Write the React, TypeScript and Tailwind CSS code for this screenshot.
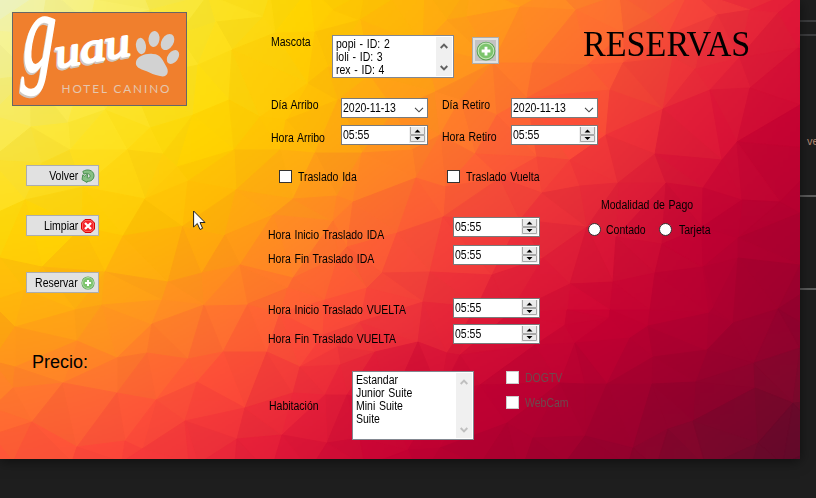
import React from "react";

type Pt = [number, number];

const VERTICES: Pt[] = [
  [-20, -20], [48, -12], [95, 0], [140, -15], [208, -5], [270, -5], [310, -12], [365, -8], [425, -10], [470, -15], [520, 7], [555, -12], [619, -5], [653, 17], [690, -10], [750, 10], [778, 13], [820, -20],
  [-15, 30], [40, 35], [90, 25], [150, 10], [178, 35], [216, 22], [263, 17], [275, 33], [315, 32], [333, 10], [360, 20], [392, 0], [423, 45], [447, 20], [466, 17], [493, 63], [576, 10], [533, 63], [623, 33], [668, 35], [717, 15], [700, 45], [798, 48], [739, 58], [830, 60],
  [-10, 80], [30, 75], [85, 65], [130, 80], [198, 65], [232, 50], [193, 115], [229, 100], [286, 120], [308, 83], [328, 67], [338, 100], [370, 75], [395, 110], [435, 92], [460, 100], [497, 115], [527, 98], [588, 65], [623, 63], [610, 90], [663, 109], [673, 57], [695, 69], [710, 90], [750, 88], [800, 105],
  [-10, 115], [31, 127], [68, 123], [105, 110], [150, 128], [42, 163], [-10, 160], [70, 150], [127, 150], [163, 154], [177, 167], [234, 150], [260, 117], [280, 150], [315, 153], [362, 153], [412, 150], [440, 135], [475, 154], [500, 178], [537, 157], [570, 160], [606, 135], [655, 154], [722, 160], [737, 142], [830, 150],
  [-8, 215], [25, 200], [83, 187], [145, 199], [188, 181], [236, 190], [123, 236], [82, 227], [42, 267], [0, 258], [105, 272], [168, 282], [202, 273], [183, 226], [225, 235], [273, 215], [293, 199], [337, 196], [353, 202], [416, 178], [445, 187], [443, 217], [333, 221], [397, 233], [347, 247], [338, 257], [293, 278], [382, 273], [430, 272], [492, 275], [520, 220], [542, 193], [580, 186], [618, 183], [666, 183], [703, 188], [742, 200], [780, 202], [800, 213], [830, 205],
  [587, 227], [616, 237], [662, 244], [543, 258], [570, 284], [613, 282], [655, 273], [703, 267], [702, 227], [738, 238], [738, 258], [800, 265], [830, 275], [713, 308], [650, 310], [610, 310], [567, 310], [778, 309],
  [-10, 302], [25, 290], [15, 327], [75, 310], [102, 305], [77, 341], [117, 358], [152, 324], [162, 300], [204, 305], [248, 304], [188, 359], [223, 352], [267, 352], [147, 353], [240, 265], [288, 288], [367, 288], [280, 313], [325, 300], [360, 322], [323, 335], [337, 347], [375, 352], [418, 342], [423, 302], [447, 353], [460, 355], [477, 307], [510, 313], [535, 345],
  [565, 325], [575, 343], [609, 318], [648, 326], [630, 338], [653, 357], [709, 313], [707, 350], [733, 323], [754, 363], [755, 388], [800, 348], [830, 340],
  [-8, 361], [15, 367], [13, 388], [63, 383], [32, 422], [-8, 408], [-8, 435], [117, 393], [156, 400], [197, 382], [185, 421], [245, 408], [237, 439], [77, 447], [125, 441], [142, 449], [300, 367], [340, 365], [293, 393], [325, 395], [347, 395], [282, 435], [327, 443], [360, 438], [390, 405], [408, 450], [440, 448], [440, 395], [480, 385], [507, 423], [533, 438], [560, 383],
  [585, 384], [607, 384], [652, 384], [695, 382], [693, 421], [668, 429], [633, 448], [585, 436], [758, 443], [793, 403], [830, 442], [830, 400],
  [-20, 485], [13, 462], [72, 462], [122, 462], [189, 462], [198, 464], [235, 463], [270, 475], [310, 470], [365, 466], [420, 480], [480, 465], [520, 475], [565, 463], [628, 465], [656, 468], [706, 467], [752, 465], [783, 464], [830, 485],
];

const ROWS = [0, 130, 230, 320, 395, 459];
const TONES = [
  ["eff6c4", "f5ee75", "f8e632", "ffd600", "ffbc05", "ffa018", "ff7b2e", "f4433b", "e01838"],
  ["f8ea55", "fbe225", "ffd800", "ffbc04", "ff931e", "ff6935", "f84039", "dc1837", "c60032"],
  ["ffd806", "ffcb00", "ffb106", "ff8a25", "fd5a38", "f13a3b", "dc1c37", "c00032", "aa002f"],
  ["ffad0c", "ff9e1a", "ff7b2d", "ff5638", "ef353b", "d91435", "c80032", "b10030", "90002d"],
  ["ff7b2c", "ff6a35", "fc4b39", "ec2b3a", "cf0734", "c00033", "a9002f", "8f002c", "760a2b"],
  ["ff5538", "f9433a", "ec2b3a", "d71136", "c00032", "ab002f", "94002d", "79092b", "5a0929"],
].map((r) => r.map((h) => [0, 2, 4].map((i) => parseInt(h.slice(i, i + 2), 16))));

function tone(x: number, y: number, shift: number) {
  const cx = Math.max(0, Math.min(799, x)) / 100;
  const cy = Math.max(0, Math.min(458, y));
  const r = ROWS.findIndex((v, i) => i < ROWS.length - 1 && cy >= v && cy < ROWS[i + 1]);
  const c = Math.floor(cx);
  const u = cx - c;
  const v = (cy - ROWS[r]) / (ROWS[r + 1] - ROWS[r]);
  const rgb = [0, 1, 2].map((k) => {
    const a = TONES[r][c][k] * (1 - u) + TONES[r][c + 1][k] * u;
    const b = TONES[r + 1][c][k] * (1 - u) + TONES[r + 1][c + 1][k] * u;
    return Math.round(Math.max(0, Math.min(255, (a * (1 - v) + b * v) * (1 + shift))));
  });
  return `rgb(${rgb.join(",")})`;
}

// Bowyer–Watson triangulation of the facet corners.
function triangulate(src: Pt[]) {
  const pts: Pt[] = [...src, [-5000, -4000], [6000, -4100], [400, 7000]];
  const n = src.length;
  const circle = (a: number, b: number, c: number) => {
    const [ax, ay] = pts[a], [bx, by] = pts[b], [cx, cy] = pts[c];
    const d = 2 * (ax * (by - cy) + bx * (cy - ay) + cx * (ay - by)) || 1e-9;
    const A = ax * ax + ay * ay, B = bx * bx + by * by, C = cx * cx + cy * cy;
    const x = (A * (by - cy) + B * (cy - ay) + C * (ay - by)) / d;
    const y = (A * (cx - bx) + B * (ax - cx) + C * (bx - ax)) / d;
    return { t: [a, b, c], x, y, r: (ax - x) ** 2 + (ay - y) ** 2 };
  };
  let tris = [circle(n, n + 1, n + 2)];
  for (let i = 0; i < n; i++) {
    const [px, py] = pts[i];
    const edges = new Map<string, Pt>();
    tris = tris.filter((t) => {
      if ((px - t.x) ** 2 + (py - t.y) ** 2 >= t.r) return true;
      for (let k = 0; k < 3; k++) {
        const a = t.t[k], b = t.t[(k + 1) % 3];
        const key = a < b ? `${a}_${b}` : `${b}_${a}`;
        if (edges.has(key)) edges.delete(key);
        else edges.set(key, [a, b]);
      }
      return false;
    });
    edges.forEach(([a, b]) => tris.push(circle(a, b, i)));
  }
  return tris.filter((t) => t.t.every((v) => v < n)).map((t) => t.t.map((v) => pts[v]));
}

const FACETS = triangulate(VERTICES).map((p, i) => ({
  points: p.map((q) => q.join(",")).join(" "),
  fill: tone(
    (p[0][0] + p[1][0] + p[2][0]) / 3,
    (p[0][1] + p[1][1] + p[2][1]) / 3,
    (((i * 37) % 11) - 5) * 0.0035
  ),
}));

// A smooth colour field lies under translucent facets, which keeps their edges soft.
const FIELD = Array.from({ length: 45 * 28 }, (_, i) => ({
  x: ((i % 45) - 2) * 20,
  y: (Math.floor(i / 45) - 2) * 20,
}));

function Backdrop() {
  return (
    <svg className="absolute inset-0" width="800" height="459" viewBox="0 0 800 459">
      <filter id="soften" filterUnits="userSpaceOnUse" x="-40" y="-40" width="880" height="540" colorInterpolationFilters="sRGB">
        <feGaussianBlur stdDeviation="10" />
      </filter>
      <g filter="url(#soften)">
        {FIELD.map((c, i) => (
          <rect key={i} x={c.x} y={c.y} width="21" height="21" fill={tone(c.x + 10, c.y + 10, 0)} />
        ))}
      </g>
      <g opacity="0.7">
        {FACETS.map((f, i) => (
          <polygon key={i} points={f.points} fill={f.fill} stroke={f.fill} strokeWidth="1" strokeLinejoin="round" />
        ))}
      </g>
    </svg>
  );
}

function T({ children, className = "" }: { children: React.ReactNode; className?: string }) {
  return (
    <span className={`block origin-left scale-x-[0.875] whitespace-nowrap text-[12px] leading-[13px] [word-spacing:0.9px] ${className}`}>
      {children}
    </span>
  );
}

function Plus({ size }: { size: number }) {
  return (
    <svg width={size} height={size} viewBox="0 0 16 16" className="shrink-0">
      <circle cx="8" cy="8" r="7.5" fill="#57a04f" />
      <circle cx="8" cy="8" r="6.3" fill="#7cc46c" stroke="#c4e6b8" strokeWidth="0.9" />
      <path d="M8 4.500v7M4.500 8h7" stroke="#fff" strokeWidth="2.3" />
    </svg>
  );
}

function Back() {
  return (
    <svg width="14" height="14" viewBox="0 0 14 14" className="shrink-0">
      <path d="M1.800 2.500C6-.5 12.800 1 13 6.500c0 4-3.200 6.200-7 5.900v1.100L1 10.600l.8-4.800 1.900 1.600c.6-1.400 1.800-2 3-1.900l-.6 3.200c2 .6 3.300-.3 3-1.900C8.700 4.400 5.500 3.600 3 5.200z" fill="#86c084" stroke="#4b8f50" strokeWidth="1" strokeLinejoin="round" />
    </svg>
  );
}

function Cancel() {
  return (
    <svg width="14" height="14" viewBox="0 0 14 14" className="shrink-0">
      <path d="M4 .5h6L13.5 4v6L10 13.5H4L.5 10V4z" fill="#f5222a" stroke="#d90000" />
      <path d="M4.3 1.5h5.4l2.8 2.8v5.4l-2.8 2.8H4.3L1.5 9.7V4.3z" fill="none" stroke="#ff7770" strokeWidth=".7" />
      <path d="M4 4l6 6M10 4l-6 6" stroke="#fff" strokeWidth="2.3" />
    </svg>
  );
}

function Btn({ label, icon, className }: { label: string; icon: React.ReactNode; className: string }) {
  return (
    <button className={`flex h-[21px] w-[73px] items-center justify-end border border-[#adadad] bg-[#e1e1e1] pr-[3px] ${className}`}>
      <T className="mr-[3px] mt-px origin-right">{label}</T>
      {icon}
    </button>
  );
}

function TimeBox({ className = "" }: { className?: string }) {
  return (
    <div className={`flex h-5 w-[87px] justify-between border border-[#7a7a7a] bg-white pl-px ${className}`}>
      <T className="mt-[3px]">05:55</T>
      <svg width="17" height="16" viewBox="0 0 17 16" className="mt-px mr-px">
        <rect width="17" height="16" fill="#f0f0f0" />
        <path d="M1.5 0v7.500h14V0" fill="#ebebeb" stroke="#a8a8a8" />
        <path d="M1.5 8.500v6h14v-6z" fill="#ebebeb" stroke="#a8a8a8" />
        <path d="M5.500 5.500h6L8.500 2.500zM5.500 10h6l-3 3z" fill="#000" />
      </svg>
    </div>
  );
}

function DateBox() {
  return (
    <div className="flex h-5 w-[87px] justify-between border border-[#7a7a7a] bg-white pl-px">
      <T className="mt-[3px] w-[65px]">2020-11-13</T>
      <svg width="10" height="6" viewBox="0 0 10 6" className="mr-[3px] mt-[8px]">
        <path d="M1 .8l4 4 4-4" fill="none" stroke="#444" strokeWidth="1.1" />
      </svg>
    </div>
  );
}

function ListBox({ items, muted, className }: { items: string[]; muted?: boolean; className: string }) {
  const color = muted ? "#bfbfbf" : "#606060";
  return (
    <div className={`flex w-[122px] shrink-0 justify-between border border-[#828790] bg-white p-px ${className}`}>
      <div className="pl-[2px] pt-px">
        {items.map((v) => <T key={v}>{v}</T>)}
      </div>
      <div className="flex w-4 flex-col items-center justify-between bg-[#f0f0f0] pb-[5px] pt-[6px]">
        <svg width="8" height="6" viewBox="0 0 8 6"><path d="M.7 5L4 1.7 7.3 5" fill="none" stroke={color} strokeWidth="1.9" /></svg>
        <svg width="8" height="6" viewBox="0 0 8 6"><path d="M.7 1L4 4.3 7.3 1" fill="none" stroke={color} strokeWidth="1.9" /></svg>
      </div>
    </div>
  );
}

function Check({ label, disabled }: { label: string; disabled?: boolean }) {
  return (
    <label className="flex h-[13px] items-center gap-[6px]">
      <span className={`block size-[13px] shrink-0 border bg-white ${disabled ? "border-[#cccccc]" : "border-[#333]"}`} />
      <T className={disabled ? "mt-[2px] text-[#6d4a4e]" : "mt-[2px]"}>{label}</T>
    </label>
  );
}

function Radio({ label, className }: { label: string; className: string }) {
  return (
    <label className={`flex h-[13px] items-center ${className}`}>
      <span className="block size-[13px] shrink-0 rounded-full border border-[#333] bg-white" />
      <T className="mt-[2px]">{label}</T>
    </label>
  );
}

function Logo() {
  const script = (fill: string) => (
    <g fill={fill} stroke={fill} strokeLinejoin="round" fontFamily="Liberation Serif, serif" fontStyle="italic">
      <text transform="translate(9 57) rotate(4) scale(.62 1.15)" fontSize="100" strokeWidth="2">g</text>
      <text transform="translate(44 55) rotate(-10)" fontSize="42" strokeWidth="2.2" textLength="76" lengthAdjust="spacingAndGlyphs">uau</text>
    </g>
  );
  return (
    <div className="ml-3 mt-3 h-[94px] w-[175px] border border-[#666] bg-[#f07f2d]">
      <svg width="173" height="92" viewBox="0 0 173 92" className="overflow-visible">
        <g transform="translate(-1 2)">{script("#cfc8c2")}</g>
        {script("#fff")}
        <g fill="#d2d2d2">
          <ellipse cx="128" cy="33" rx="5" ry="8.2" transform="rotate(-8 128 33)" />
          <ellipse cx="141" cy="26" rx="5.5" ry="8" transform="rotate(8 141 26)" />
          <ellipse cx="154.500" cy="29" rx="6" ry="8.700" transform="rotate(31 154.500 29)" />
          <ellipse cx="160" cy="44" rx="5.200" ry="7.700" transform="rotate(36 160 44)" />
          <path d="M123 49c1-6 10-9 17-8 8 0 10 7 13 12 4 6 1 12-6 10-6-1-9-3-14-5-6-2-11-4-10-9z" />
        </g>
        <text x="48.500" y="80" fill="#e5c6ae" fontFamily="Lato, sans-serif" fontSize="11.800" textLength="108" lengthAdjust="spacing">HOTEL CANINO</text>
      </svg>
    </div>
  );
}

export default function App() {
  return (
    <div className="relative flex h-[498px] w-[816px] overflow-hidden bg-[#1e1e1e] font-['Liberation_Sans',Arial,sans-serif] text-black">
      <main className="relative h-[459px] w-[800px] shrink-0 shadow-[0_2px_12px_rgba(0,0,0,0.55)]">
        <Backdrop />
        <div className="relative flex h-full">
          <aside className="flex w-[268px] shrink-0 flex-col">
            <Logo />
            <Btn label="Volver" icon={<Back />} className="ml-[26px] mt-[59px]" />
            <Btn label="Limpiar" icon={<Cancel />} className="ml-[26px] mt-[29px]" />
            <Btn label="Reservar" icon={<Plus size={14} />} className="ml-[26px] mt-[36px]" />
            <p className="ml-[32px] mt-[59px] text-[18px] leading-[21px]">Precio:</p>
          </aside>

          <div className="flex w-[532px] flex-col">
            <section className="flex h-[98px] items-start pl-[3px]">
              <div className="w-[61px] pt-[36px]"><T>Mascota</T></div>
              <ListBox items={["popi - ID: 2", "loli - ID: 3", "rex - ID: 4"]} className="mt-[35px] h-[43px]" />
              <button className="ml-[18px] mt-[37px] flex h-[27px] w-[27px] items-center justify-center border border-[#adadad] bg-[#c3c3c3] shadow-[inset_0_0_0_2px_#e1e1e1]">
                <Plus size={20} />
              </button>
              <h1 className="ml-[84px] mt-[25px] origin-left scale-x-[0.975] whitespace-nowrap font-['Liberation_Serif',serif] text-[35px] leading-[40px]">RESERVAS</h1>
            </section>

            <section className="flex h-[72px] items-start pl-[3px]">
              <div className="flex w-[70px] flex-col gap-[20px] pt-px"><T>Día Arribo</T><T>Hora Arribo</T></div>
              <div className="flex w-[101px] flex-col gap-[7px]"><DateBox /><TimeBox /></div>
              <div className="flex w-[69px] flex-col gap-[19px] pt-px"><T>Día Retiro</T><T>Hora Retiro</T></div>
              <div className="flex flex-col gap-[7px]"><DateBox /><TimeBox /></div>
            </section>

            <section className="flex h-[28px] pl-[11px]">
              <div className="w-[168px]"><Check label="Traslado Ida" /></div>
              <Check label="Traslado Vuelta" />
            </section>

            <section className="flex h-[173px] items-start">
              <div className="w-[185px] shrink-0 pt-[31px]">
                <T>Hora Inicio Traslado IDA</T>
                <T className="mt-[11px]">Hora Fin Traslado IDA</T>
                <T className="mt-[38px]">Hora Inicio Traslado VUELTA</T>
                <T className="mt-[16px]">Hora Fin Traslado VUELTA</T>
              </div>
              <div className="w-[135px] pt-[19px]">
                <TimeBox />
                <TimeBox className="mt-[8px]" />
                <TimeBox className="mt-[33px]" />
                <TimeBox className="mt-[6px]" />
              </div>
              <div className="flex flex-col pt-px">
                <T className="ml-[13px]">Modalidad de Pago</T>
                <div className="mt-[11px] flex">
                  <Radio label="Contado" className="w-[71px] gap-[5px]" />
                  <Radio label="Tarjeta" className="gap-[7px]" />
                </div>
              </div>
            </section>

            <section className="flex items-start pl-px">
              <div className="w-[83px] pt-[29px]"><T>Habitación</T></div>
              <ListBox muted items={["Estandar", "Junior Suite", "Mini Suite", "Suite"]} className="h-[69px]" />
              <div className="ml-8 flex flex-col gap-3">
                <Check label="DOGTV" disabled />
                <Check label="WebCam" disabled />
              </div>
            </section>
          </div>
        </div>
      </main>

      <aside className="flex w-4 flex-col overflow-hidden">
        <div className="mt-[20px] h-[2px] shrink-0 bg-[#3d3d3f]" />
        <div className="mt-[12px] h-[2px] shrink-0 bg-[#3d3d3f]" />
        <div className="ml-[7px] mt-[98px] h-[14px] text-[11px] leading-[14px] text-[#b78b75]">ve</div>
        <div className="mt-[47px] h-[2px] shrink-0 bg-[#5c5c5c]" />
        <div className="mt-[91px] h-[2px] shrink-0 bg-[#5c5c5c]" />
      </aside>

      <svg className="absolute left-[193px] top-[210px]" width="13" height="21" viewBox="0 0 13 21">
        <path d="M.6 1v16l3.700-3.500 2.700 6 2.600-1.200L7 12.500h5z" fill="#fff" stroke="#222" />
      </svg>
    </div>
  );
}
